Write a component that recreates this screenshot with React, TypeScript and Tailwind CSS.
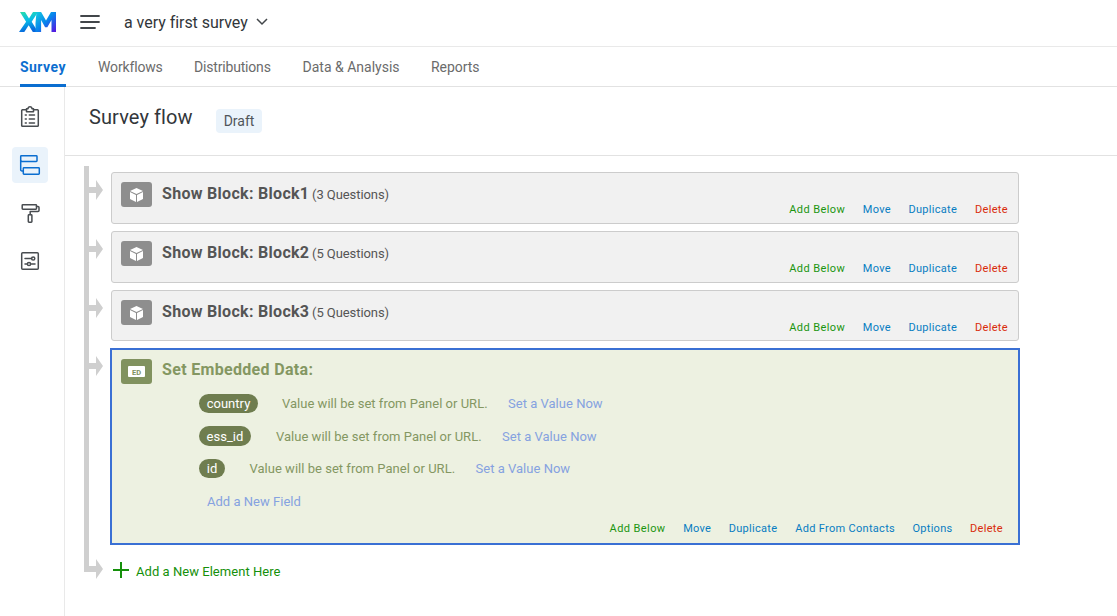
import React from "react";

function Logo() {
  return (
    <svg width="38" height="22" viewBox="0 0 38 22" className="block">
      <defs>
        <linearGradient id="gx" x1="0" y1="0" x2="0.25" y2="1">
          <stop offset="0" stopColor="#2be0a8" />
          <stop offset="0.5" stopColor="#06bce8" />
          <stop offset="1" stopColor="#0768dd" />
        </linearGradient>
        <linearGradient id="gm" x1="0" y1="0" x2="1" y2="1">
          <stop offset="0" stopColor="#12cfe0" />
          <stop offset="0.5" stopColor="#0784ec" />
          <stop offset="1" stopColor="#5b0fe0" />
        </linearGradient>
      </defs>
      <path d="M1 1h5l4 6.500 4-6.500h5L12.700 10.800 19 21h-5.200L9.700 14.200 5.300 21H0L7.100 10.700z" fill="url(#gx)" />
      <path d="M17.500 1h4.600l4.900 8.600L32 1h5v20h-4.500V8.900l-4.200 7.300h-2.200l-4-7.300V21h-5.600V12z" fill="url(#gm)" />
    </svg>
  );
}

function Arrow({ className }: { className: string }) {
  return (
    <svg width="14" height="20" viewBox="0 0 14 20" className={`block shrink-0 ${className}`}>
      <path d="M0 7h7V0l7 10-7 10v-7H0z" fill="#cfcfcf" />
    </svg>
  );
}

function SideIcon({ active, children }: { active?: boolean; children: React.ReactNode }) {
  return (
    <div className={`flex h-9 w-9 items-center justify-center rounded ${active ? "bg-[#eaf3fb] text-[#0b6ed0]" : "text-[#484c50]"}`}>
      <svg width="24" height="24" viewBox="0 0 24 24" fill="none" stroke="currentColor" strokeWidth="1.5" strokeLinejoin="round" strokeLinecap="round">
        {children}
      </svg>
    </div>
  );
}

const actions = [
  { label: "Add Below", cls: "w-[56px] tracking-[0.420px] text-[#1b950f]" },
  { label: "Move", cls: "w-[28px] text-[#087dc2]" },
  { label: "Duplicate", cls: "w-[49px] text-[#087dc2]" },
  { label: "Delete", cls: "w-[33px] text-[#d92b0b]" },
];

const edActions = [
  { label: "Add Below", cls: "w-[56px] tracking-[0.420px] text-[#1b950f]" },
  { label: "Move", cls: "w-[28px] text-[#087dc2]" },
  { label: "Duplicate", cls: "w-[49px] text-[#087dc2]" },
  { label: "Add From Contacts", cls: "w-[99.500px] text-[#087dc2]" },
  { label: "Options", cls: "w-[40px] text-[#087dc2]" },
  { label: "Delete", cls: "w-[33px] text-[#d92b0b]" },
];

function Actions({ items }: { items: { label: string; cls: string }[] }) {
  return (
    <div className="flex justify-end gap-[17.600px] text-[11px] leading-[18px] tracking-[0.300px]">
      {items.map((a) => (
        <a key={a.label} className={`whitespace-nowrap ${a.cls}`}>{a.label}</a>
      ))}
    </div>
  );
}

const blocks = [
  { name: "Block1", count: 3, row: "h-[65px] pt-1.5", box: "h-[52px]", arrow: "mt-3.5" },
  { name: "Block2", count: 5, row: "h-[59px]", box: "h-[52px]", arrow: "mt-2" },
  { name: "Block3", count: 5, row: "h-[58px]", box: "h-[51px]", arrow: "mt-2" },
];

function Rail({ children, bar = "" }: { children: React.ReactNode; bar?: string }) {
  return <div className={`flex w-[27px] shrink-0 border-l-[5px] border-[#cfcfcf] ${bar}`}>{children}</div>;
}

const fields = [
  { name: "country", pill: "h-[19px] w-[59px]", gap: "ml-6", row: "h-8 pt-[7px] leading-[19px]" },
  { name: "ess_id", pill: "h-5 w-[52px]", gap: "ml-[25px]", row: "h-[33px] pt-[7px] leading-[21px]" },
  { name: "id", pill: "h-[19px] w-[26px]", gap: "ml-[24.500px]", row: "h-[33px] pt-[7px] leading-[19px]" },
];

const tabs = [
  { label: "Workflows", cls: "w-16 tracking-[-0.150px]" },
  { label: "Distributions", cls: "w-[76.500px] tracking-[-0.180px]" },
  { label: "Data & Analysis", cls: "w-[96.500px]" },
  { label: "Reports", cls: "w-[48px] tracking-[-0.050px]" },
];

export default function App() {
  return (
    <div className="flex h-[616px] w-[1117px] flex-col overflow-hidden bg-white font-['Roboto',sans-serif] text-[#32363a]">
      <header className="flex h-[47px] shrink-0 items-center border-b border-[#e9e9e9] pb-0.5 pl-[19px]">
        <Logo />
        <svg width="20" height="14" viewBox="0 0 20 14" className="ml-[23px]" stroke="#42464a" strokeWidth="1.800" strokeLinecap="round">
          <path d="M1 1h18M1 7h18M1 13h14" />
        </svg>
        <span className="ml-6 w-[124px] whitespace-nowrap pt-0.5 text-[16px] tracking-[-0.040px]">a very first survey</span>
        <svg width="12" height="8" viewBox="0 0 12 8" className="ml-2" fill="none" stroke="#42464a" strokeWidth="1.500">
          <path d="M1 1l5 5 5-5" />
        </svg>
      </header>
      <nav className="flex h-10 shrink-0 gap-8 border-b border-[#e2e2e2] pl-5 text-[14px] leading-[40px] text-[#6b6b6b]">
        <span className="h-10 w-[46px] border-b-[3px] border-[#0b6ed0] font-bold tracking-[0.450px] text-[#0b6ed0]">Survey</span>
        {tabs.map((t) => <span key={t.label} className={`whitespace-nowrap ${t.cls}`}>{t.label}</span>)}
      </nav>
      <div className="flex min-h-0 flex-1">
        <aside className="flex w-[65px] shrink-0 flex-col gap-3 border-r border-[#e9e9e9] pl-3 pt-3">
          <SideIcon>
            <path d="M8.500 4.700H4.500A1 1 0 0 0 3.700 5.500V20.500A1 1 0 0 0 4.500 21.300H19.500A1 1 0 0 0 20.300 20.500V5.500A1 1 0 0 0 19.500 4.700H15.500M8.500 6.700V3.700H10C10.200 1 13.800 1 14 3.700H15.500V6.700z" />
            <path d="M7.300 10h1M7.300 14h1M7.300 18h1M11.300 10H16.500M11.300 14H16.500M11.300 18H16.500" />
          </SideIcon>
          <SideIcon active>
            <rect x="2.700" y="2.700" width="16.300" height="5.800" rx="0.700" />
            <rect x="5.300" y="14.700" width="16" height="6.600" rx="0.700" />
            <path d="M2.700 7.500v9.500Q2.700 18 5.300 18" />
          </SideIcon>
          <SideIcon>
            <rect x="4.200" y="3.700" width="14.300" height="4.600" rx="0.700" />
            <path d="M18.500 5.500h1.500q1 0 1 1v3q0 1-1 1h-7.800v3" />
            <rect x="10.300" y="13.700" width="3.600" height="7.600" rx="0.700" />
          </SideIcon>
          <SideIcon>
            <rect x="3.700" y="3.700" width="16.600" height="16.600" rx="1" />
            <path d="M7 9.500h6.500M7 15h2M13.500 15h3.500" />
            <circle cx="15.200" cy="9.500" r="1.600" />
            <circle cx="11" cy="15" r="1.600" />
          </SideIcon>
        </aside>
        <main className="flex-1">
          <div className="flex h-[69px] border-b border-[#e2e2e2] pl-6">
            <h1 className="w-[103px] whitespace-nowrap pt-[15px] text-[20px] leading-[30px] tracking-[0.100px]">Survey flow</h1>
            <span className="ml-6 mt-[22px] h-6 w-[46px] rounded bg-[#eaf3fb] text-center text-[14px] leading-6 text-[#50555a]">Draft</span>
          </div>
          <div className="flex w-[954px] flex-col pl-[19px] pt-2.5">
            {blocks.map((b) => (
              <div key={b.name} className="flex">
                <Rail><Arrow className={b.arrow} /></Rail>
                <div className={`flex-1 ${b.row}`}>
                  <div className={`flex flex-col rounded-[3px] border border-[#cccccc] bg-[#f1f1f1] pl-[9px] pr-2.5 pt-[9px] ${b.box}`}>
                    <div className="flex h-[19px] shrink-0">
                      <div className="flex h-[25px] w-[31px] shrink-0 items-center justify-center rounded-[3px] bg-[#8e8e8e]">
                        <svg width="15" height="14" viewBox="0 0 15 14">
                          <path d="M7.500 0L14 3 7.500 6 1 3zM1 4L7 6.900V14L1 11zM14 4V11L8 14V6.900z" fill="#fff" />
                        </svg>
                      </div>
                      <div className="ml-2.5 flex items-baseline whitespace-nowrap leading-[24px] text-[#555]">
                        <b className="w-[150px] text-base tracking-[0.300px]">Show Block: {b.name}</b>
                        <span className="text-[13px] tracking-[-0.070px]">({b.count} Questions)</span>
                      </div>
                    </div>
                    <Actions items={actions} />
                  </div>
                </div>
              </div>
            ))}
            <div className="flex">
              <Rail><Arrow className="mt-2" /></Rail>
              <div className="-ml-px -mr-px flex h-[197px] flex-1 flex-col border-2 border-[#3a70d4] bg-[#edf1e1] pl-[9px] pr-[15px] pt-[9px] text-[#849762]">
                <div className="flex h-7">
                  <div className="flex h-[25px] w-[31px] items-center justify-center rounded-[3px] bg-[#81925f]">
                    <span className="h-[11px] w-[17px] rounded-[1px] bg-white pt-px text-center text-[7.500px] font-bold leading-[11px] text-[#81925f]">ED</span>
                  </div>
                  <b className="ml-2.5 text-base leading-[22px] tracking-[0.320px]">Set Embedded Data:</b>
                </div>
                <div className="pl-[78px] text-[13px] tracking-[0.020px]">
                  {fields.map((f) => (
                    <div key={f.name} className={`flex ${f.row}`}>
                      <span className={`rounded-full bg-[#6f7d4f] text-center text-white ${f.pill}`}>{f.name}</span>
                      <span className={`w-[206px] whitespace-nowrap ${f.gap}`}>Value will be set from Panel or URL.</span>
                      <a className="ml-5 text-[#85a2e0]">Set a Value Now</a>
                    </div>
                  ))}
                  <a className="block h-[35px] pl-2 pt-[7px] leading-[19px] text-[#85a2e0]">Add a New Field</a>
                </div>
                <Actions items={edActions} />
              </div>
            </div>
            <div className="flex h-[50px]">
              <Rail bar="h-[27px]"><Arrow className="mt-3.5" /></Rail>
              <div className="flex h-[52px] pl-0.5 pt-[17px] text-[13px] leading-[19px] text-[#15900b]">
                <svg width="16" height="16" viewBox="0 0 16 16" stroke="currentColor" strokeWidth="2"><path d="M0 8h16M8 0v16" /></svg>
                <span className="ml-[7px] tracking-[0.040px]">Add a New Element Here</span>
              </div>
            </div>
          </div>
        </main>
      </div>
    </div>
  );
}
